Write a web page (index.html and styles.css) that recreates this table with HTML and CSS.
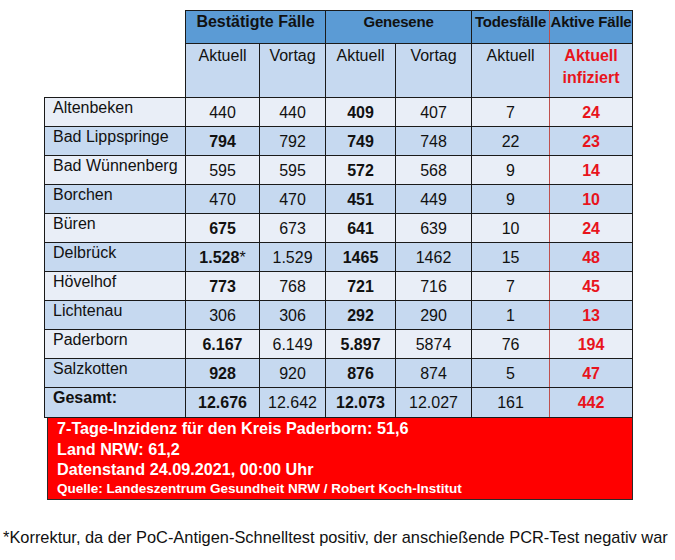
FILE: index.html
```html
<!DOCTYPE html>
<html lang="de">
<head>
<meta charset="utf-8">
<title>Corona-Fallzahlen Kreis Paderborn</title>
<link rel="stylesheet" href="styles.css">
</head>
<body>
<div class="page">
  <table class="stats">
    <colgroup>
      <col class="c-name"><col class="c-ba"><col class="c-bv"><col class="c-ga"><col class="c-gv"><col class="c-t"><col class="c-a">
    </colgroup>
    <thead>
      <tr class="h1">
        <th class="blank" rowspan="2"></th>
        <th colspan="2" class="big">Bestätigte Fälle</th>
        <th colspan="2">Genesene</th>
        <th class="death">Todesfälle</th>
        <th>Aktive Fälle</th>
      </tr>
      <tr class="h2">
        <th>Aktuell</th>
        <th>Vortag</th>
        <th>Aktuell</th>
        <th>Vortag</th>
        <th class="death">Aktuell</th>
        <th class="active">Aktuell<br>infiziert</th>
      </tr>
    </thead>
    <tbody>
      <tr class="light"><td class="name">Altenbeken</td><td>440</td><td>440</td><td class="b">409</td><td>407</td><td class="death">7</td><td class="active">24</td></tr>
      <tr class="dark"><td class="name">Bad Lippspringe</td><td class="b">794</td><td>792</td><td class="b">749</td><td>748</td><td class="death">22</td><td class="active">23</td></tr>
      <tr class="light"><td class="name">Bad Wünnenberg</td><td>595</td><td>595</td><td class="b">572</td><td>568</td><td class="death">9</td><td class="active">14</td></tr>
      <tr class="dark"><td class="name">Borchen</td><td>470</td><td>470</td><td class="b">451</td><td>449</td><td class="death">9</td><td class="active">10</td></tr>
      <tr class="light"><td class="name">Büren</td><td class="b">675</td><td>673</td><td class="b">641</td><td>639</td><td class="death">10</td><td class="active">24</td></tr>
      <tr class="dark"><td class="name">Delbrück</td><td><span class="b">1.528</span>*</td><td>1.529</td><td class="b">1465</td><td>1462</td><td class="death">15</td><td class="active">48</td></tr>
      <tr class="light"><td class="name">Hövelhof</td><td class="b">773</td><td>768</td><td class="b">721</td><td>716</td><td class="death">7</td><td class="active">45</td></tr>
      <tr class="dark"><td class="name">Lichtenau</td><td>306</td><td>306</td><td class="b">292</td><td>290</td><td class="death">1</td><td class="active">13</td></tr>
      <tr class="light"><td class="name">Paderborn</td><td class="b">6.167</td><td>6.149</td><td class="b">5.897</td><td>5874</td><td class="death">76</td><td class="active">194</td></tr>
      <tr class="dark"><td class="name">Salzkotten</td><td class="b">928</td><td>920</td><td class="b">876</td><td>874</td><td class="death">5</td><td class="active">47</td></tr>
      <tr class="dark total"><td class="name b">Gesamt:</td><td class="b">12.676</td><td>12.642</td><td class="b">12.073</td><td>12.027</td><td class="death">161</td><td class="active">442</td></tr>
    </tbody>
  </table>
  <div class="info">
    <p class="info-line">7-Tage-Inzidenz für den Kreis Paderborn: 51,6</p>
    <p class="info-line">Land NRW: 61,2</p>
    <p class="info-line">Datenstand 24.09.2021, 00:00 Uhr</p>
    <p class="info-src">Quelle: Landeszentrum Gesundheit NRW / Robert Koch-Institut</p>
  </div>
  <p class="note">*Korrektur, da der PoC-Antigen-Schnelltest positiv, der anschießende PCR-Test negativ war</p>
</div>
</body>
</html>
```

FILE: styles.css
```css
html, body {
  margin: 0;
  padding: 0;
  background: #ffffff;
}

body {
  font-family: "Liberation Sans", Arial, sans-serif;
  color: #111111;
}

.page {
  padding-top: 10px;
}

.stats {
  margin-left: 44px;
  border-collapse: collapse;
  table-layout: fixed;
  width: 589px;
}

.c-name { width: 141px; }
.c-ba { width: 74px; }
.c-bv { width: 66px; }
.c-ga { width: 70px; }
.c-gv { width: 76px; }
.c-t { width: 78px; }
.c-a { width: 83px; }

.stats th,
.stats td {
  border: 1px solid #1a1a1a;
  padding: 0;
  text-align: center;
}

.stats th.blank {
  border: none;
  background: transparent;
}

.h1 th {
  height: 30px;
  background: #5b9bd5;
  font-size: 15px;
  font-weight: bold;
  vertical-align: top;
  padding-top: 2px;
  white-space: nowrap;
  letter-spacing: -0.2px;
}

.h1 th.big {
  font-size: 16px;
  letter-spacing: 0;
}

.h2 th {
  height: 52px;
  background: #c6d9f0;
  font-size: 16px;
  font-weight: normal;
  vertical-align: top;
  padding-top: 1px;
  line-height: 21.5px;
}

.h2 th.active {
  color: #e8141c;
  font-weight: bold;
}

.stats td {
  height: 27px;
  font-size: 16px;
  vertical-align: middle;
  padding-top: 1px;
}

.stats tr.total td {
  height: 28px;
}

.light td { background: #e9eef7; }
.dark td { background: #c6d9f0; }

.stats td.name {
  text-align: left;
  vertical-align: top;
  padding: 1px 0 0 8px;
  font-size: 16px;
  white-space: nowrap;
}

.b { font-weight: bold; }

.stats td.active {
  color: #e8141c;
  font-weight: bold;
}

.stats .death {
  border-right: 1px solid #c0504d;
}

.info {
  box-sizing: border-box;
  margin-left: 47px;
  width: 586px;
  background: #ff0000;
  border: 1px solid #2a2a2a;
  border-top: none;
  padding: 0 0 1px 9px;
  color: #ffffff;
  font-weight: bold;
}

.info-line {
  margin: 0;
  font-size: 16.2px;
  line-height: 20.5px;
}

.info-src {
  margin: 0;
  font-size: 13.5px;
  line-height: 18px;
}

.note {
  margin: 28px 0 0 3px;
  font-size: 16.4px;
  line-height: 18px;
  color: #111111;
  white-space: nowrap;
}
```
